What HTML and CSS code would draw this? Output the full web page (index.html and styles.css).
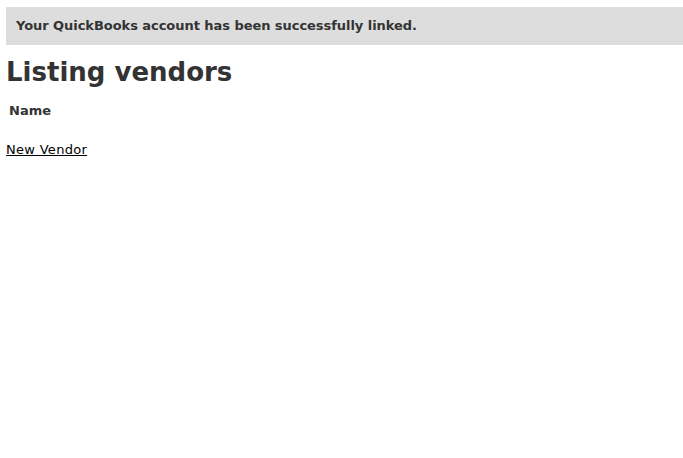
FILE: index.html
```html
<!DOCTYPE html>
<html>
<head>
<meta charset="utf-8">
<link rel="stylesheet" href="styles.css">
</head>
<body>
<p class="notice">Your QuickBooks account has been successfully linked.</p>
<h1 class="title">Listing vendors</h1>
<table class="list">
  <tr><th>Name</th></tr>
</table>
<br>
<a class="link" href="#">New Vendor</a>
</body>
</html>
```
FILE: styles.css
```css
body {
  margin: 7px 0 0 6px;
  background: #fff;
  color: #333;
  font-family: "DejaVu Sans", Verdana, sans-serif;
  font-size: 13px;
  line-height: 18px;
}
.notice {
  margin: 0;
  background: #dddddd;
  padding: 10px 10px 10px 10px;
  font-weight: bold;
  letter-spacing: -0.05px;
}
.title {
  margin: 10px 0 10px;
  font-size: 26px;
  line-height: 34px;
  font-weight: bold;
}
.list { border-spacing: 2px; }
.list th { padding: 1px; text-align: left; }
.link { color: #000; letter-spacing: 0.3px; }
```
